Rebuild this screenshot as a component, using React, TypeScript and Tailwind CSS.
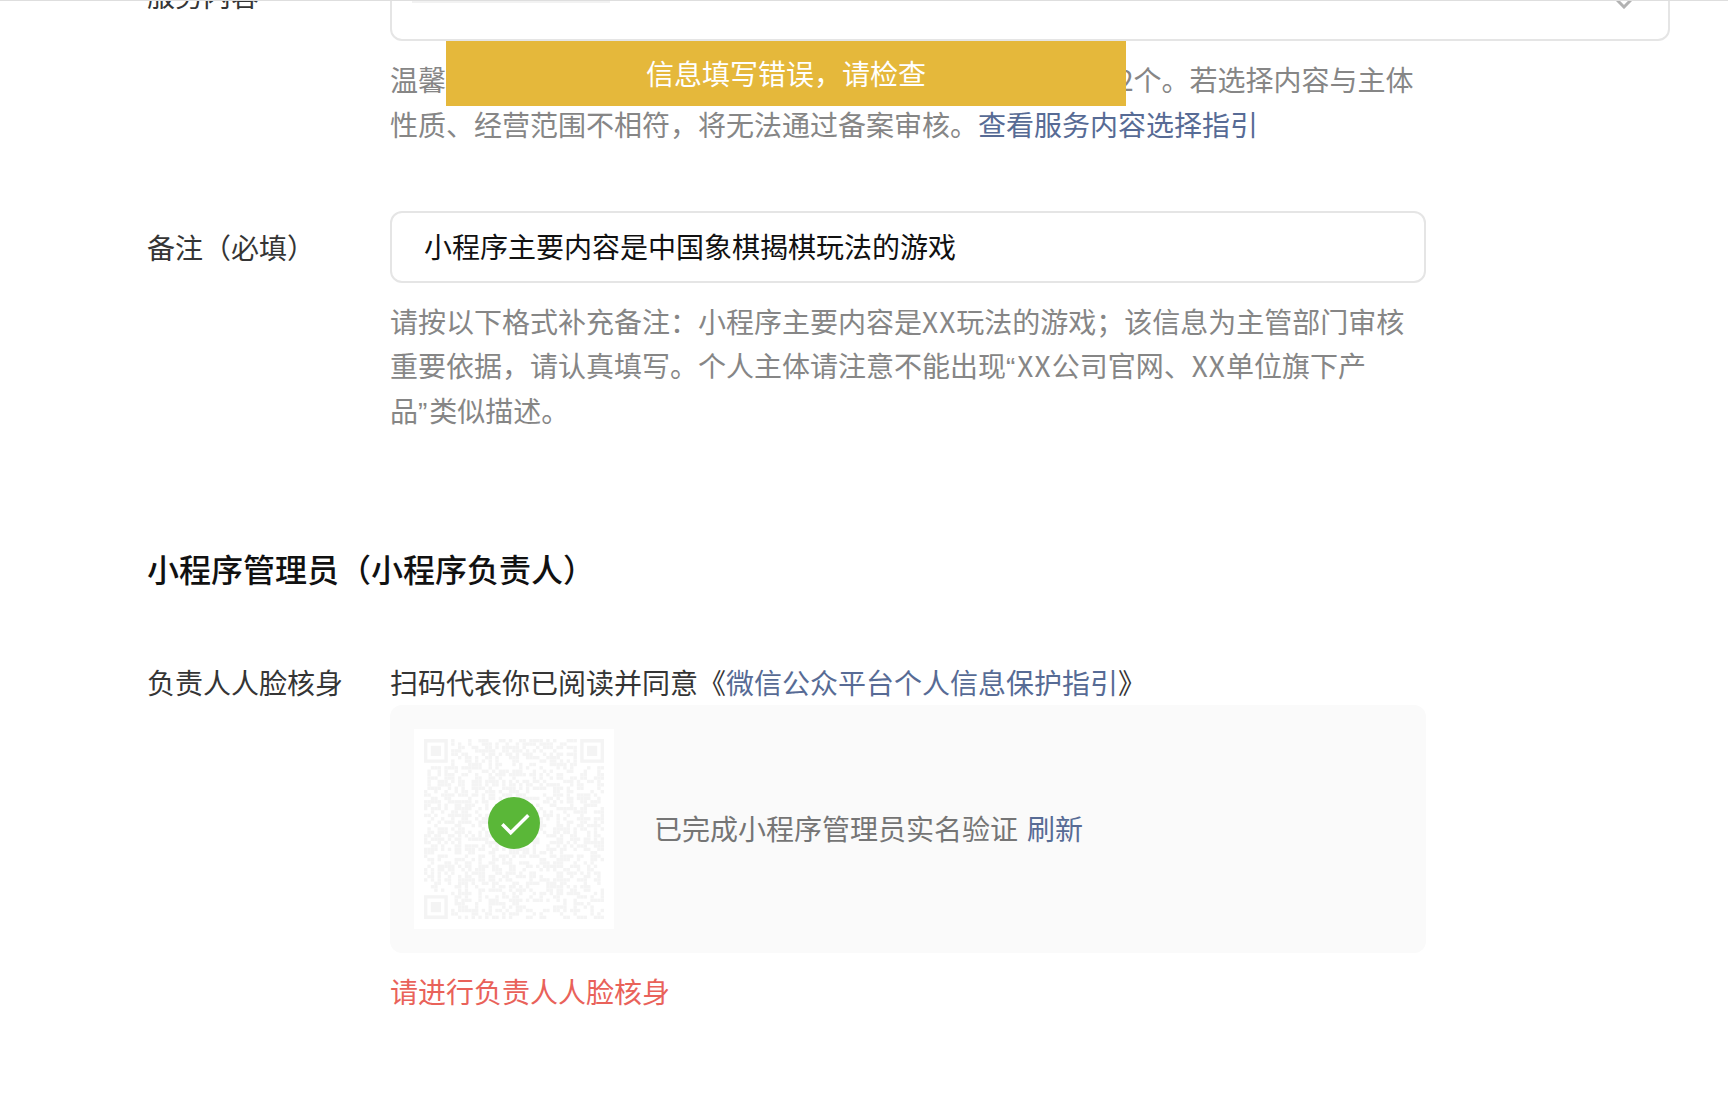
import React from 'react';

// QR 码图案是示意的，固定种子生成，每次渲染结果一样
const QR_SIZE = 53;

function inFinder(x: number, y: number) {
  const corner = (cx: number, cy: number) => x >= cx && x < cx + 8 && y >= cy && y < cy + 8;
  return corner(0, 0) || corner(QR_SIZE - 8, 0) || corner(0, QR_SIZE - 8);
}

function qrModules() {
  let seed = 20240;
  const next = () => {
    seed = (seed * 1664525 + 1013904223) % 4294967296;
    return seed / 4294967296;
  };
  const cells: { x: number; y: number }[] = [];
  for (let y = 0; y < QR_SIZE; y++) {
    for (let x = 0; x < QR_SIZE; x++) {
      const on = next() > 0.5;
      if (on && !inFinder(x, y)) cells.push({ x, y });
    }
  }
  return cells;
}

function Finder({ x, y }: { x: number; y: number }) {
  return (
    <g>
      <path d={`M${x} ${y}h7v7h-7z M${x + 1} ${y + 1}v5h5v-5z`} fillRule="evenodd" />
      <rect x={x + 2} y={y + 2} width={3} height={3} />
    </g>
  );
}

function QrCode() {
  return (
    <svg viewBox={`0 0 ${QR_SIZE} ${QR_SIZE}`} className="w-[180px] h-[180px] fill-[#f4f4f4]">
      {qrModules().map((c) => (
        <rect key={`${c.x}-${c.y}`} x={c.x} y={c.y} width={1} height={1} />
      ))}
      <Finder x={0} y={0} />
      <Finder x={QR_SIZE - 7} y={0} />
      <Finder x={0} y={QR_SIZE - 7} />
    </svg>
  );
}

function SuccessBadge() {
  return (
    <svg viewBox="0 0 52 52" className="absolute left-[74px] top-[68px] w-[52px] h-[52px]">
      <circle cx="26" cy="26" r="26" className="fill-[#5ab738]" />
      <path d="M14.3 27.3l8.4 8.4L40.3 18.3" className="fill-none stroke-white stroke-[3.5]" />
    </svg>
  );
}

const watermarks = [
  'left-[340px] top-[5px]',
  'left-[1077px] top-[5px]',
  'left-[1292px] top-[252px]',
  'left-[516px] top-[665px]',
  'left-[1188px] top-[698px]',
  'left-[482px] top-[1038px]',
  'left-[1255px] top-[1045px]',
];

const latinQuote = "pr-[2px] leading-[0] font-['Liberation_Sans',sans-serif]";

export default function App() {
  return (
    <div className="relative h-[1106px] overflow-hidden bg-white text-[28px] leading-[44.8px] text-[#353535] font-['Noto_Sans_CJK_SC',sans-serif]">
      <div className="pl-[147px] -mt-[68px]">
        {/* 服务内容 */}
        <div className="flex">
          <div className="w-[243px] shrink-0 pt-[41px]">服务内容</div>
          <div>
            <div className="flex justify-between w-[1280px] h-[109px] pl-[20px] pr-[36px] border-2 border-[#e5e5e5] rounded-[12px]">
              <div className="mt-[36px] w-[198px] h-[33px] bg-[#f2f2f2]" />
              <svg viewBox="0 0 16 10" className="mt-[65px] w-4 h-[10px] fill-none stroke-[#b2b2b2] stroke-[3]">
                <path d="M1 1l7 7 7-7" />
              </svg>
            </div>
            <p className="mt-[16px] w-[1034px] text-[#868686]">
              温馨提示：请选择小程序实际相关的服务内容，最多可选择2个。若选择内容与主体
              <br />
              性质、经营范围不相符，将无法通过备案审核。
              <a className="text-[#576b95]">查看服务内容选择指引</a>
            </p>
          </div>
        </div>

        {/* 备注 */}
        <div className="flex mt-[64px]">
          <div className="w-[243px] shrink-0 pt-[14px]">备注（必填）</div>
          <div className="w-[1036px]">
            <div className="flex items-center h-[72px] px-[32px] border-2 border-[#e5e5e5] rounded-[12px] text-[#111111]">
              小程序主要内容是中国象棋揭棋玩法的游戏
            </div>
            <p className="mt-[16px] text-[#868686]">
              请按以下格式补充备注：小程序主要内容是<span className="tracking-[1.1px]">XX</span>玩法的游戏；该信息为主管部门审核
              <br />
              重要依据，请认真填写。个人主体请注意不能出现<span className={latinQuote}>“</span><span className="tracking-[1.1px]">XX</span>公司官网、<span className="tracking-[1.1px]">XX</span>单位旗下产
              <br />
              品<span className={latinQuote}>”</span>类似描述。
            </p>
          </div>
        </div>

        <h2 className="mt-[113px] text-[32px] leading-[44px] font-medium text-[#111111]">
          小程序管理员（小程序负责人）
        </h2>

        {/* 负责人人脸核身 */}
        <div className="flex mt-[70px]">
          <div className="w-[243px] shrink-0">负责人人脸核身</div>
          <div className="w-[1036px]">
            <p>
              扫码代表你已阅读并同意《<a className="text-[#576b95]">微信公众平台个人信息保护指引</a>》
            </p>
            <div className="flex items-center gap-[40px] p-6 bg-[#fafafa] rounded-[12px]">
              <div className="relative flex items-center justify-center w-[200px] h-[200px] bg-white">
                <QrCode />
                <SuccessBadge />
              </div>
              <div className="text-[#757575]">
                已完成小程序管理员实名验证<a className="ml-[9px] text-[#576b95]">刷新</a>
              </div>
            </div>
            <p className="mt-[16px] text-[#e9625a]">请进行负责人人脸核身</p>
          </div>
        </div>
      </div>

      {/* 顶部导航栏的下边线 */}
      <div className="absolute top-0 inset-x-0 h-px bg-[#dedede]" />

      {/* 提示条 */}
      <div className="absolute left-[446px] top-[41px] flex items-center justify-center w-[680px] h-[65px] bg-[#e5b83b] text-white">
        信息填写错误，请检查
      </div>

      {/* 水印 */}
      {watermarks.map((pos) => (
        <div key={pos} className={`absolute ${pos} -rotate-[38deg] whitespace-nowrap text-[24px] leading-[30px] text-[#000000]/[0.025] pointer-events-none`}>
          仅限用户为中心 FA41735B1F6F8
        </div>
      ))}
    </div>
  );
}
